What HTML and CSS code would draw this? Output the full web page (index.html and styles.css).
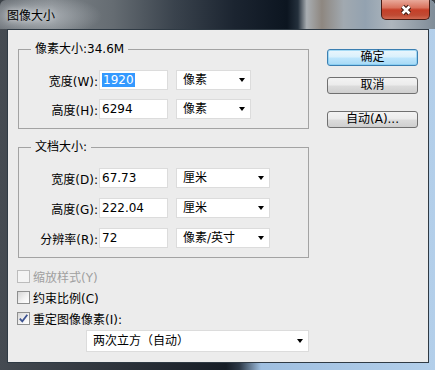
FILE: index.html
```html
<!DOCTYPE html>
<html lang="zh-CN">
<head>
    <meta charset="UTF-8">
    <title>图像大小</title>
    <link rel="stylesheet" href="styles.css">
</head>
<body>
    <div class="window">
        <div class="titlebar">
            <span class="title">图像大小</span>
            <div class="close-btn">
                <svg width="14" height="12" viewBox="0 0 14 12">
                    <path d="M3.5 2.5 L10.5 9.5 M10.5 2.5 L3.5 9.5" stroke="#3b1810" stroke-width="4.6" fill="none"/>
                    <path d="M3.5 2.5 L10.5 9.5 M10.5 2.5 L3.5 9.5" stroke="#ffffff" stroke-width="2.6" fill="none"/>
                </svg>
            </div>
        </div>
        <div class="client">
            <div class="main-col">
                <fieldset class="group group-pixel">
                    <legend>像素大小:34.6M</legend>
                    <div class="field-row">
                        <span class="field-label">宽度(W):</span>
                        <span class="text-box"><span class="selected">1920</span></span>
                        <span class="dropdown unit-short">像素<i class="arrow"></i></span>
                    </div>
                    <div class="field-row">
                        <span class="field-label">高度(H):</span>
                        <span class="text-box">6294</span>
                        <span class="dropdown unit-short">像素<i class="arrow"></i></span>
                    </div>
                </fieldset>

                <fieldset class="group group-doc">
                    <legend>文档大小:</legend>
                    <div class="field-row">
                        <span class="field-label">宽度(D):</span>
                        <span class="text-box">67.73</span>
                        <span class="dropdown unit-long">厘米<i class="arrow"></i></span>
                    </div>
                    <div class="field-row">
                        <span class="field-label">高度(G):</span>
                        <span class="text-box">222.04</span>
                        <span class="dropdown unit-long">厘米<i class="arrow"></i></span>
                    </div>
                    <div class="field-row">
                        <span class="field-label">分辨率(R):</span>
                        <span class="text-box">72</span>
                        <span class="dropdown unit-long">像素/英寸<i class="arrow"></i></span>
                    </div>
                </fieldset>

                <div class="options">
                    <div class="check-row disabled">
                        <span class="check-box"></span>
                        <span>缩放样式(Y)</span>
                    </div>
                    <div class="check-row">
                        <span class="check-box"></span>
                        <span>约束比例(C)</span>
                    </div>
                    <div class="check-row">
                        <span class="check-box">
                            <svg width="11" height="11" viewBox="0 0 11 11">
                                <path d="M1.8 5.6 L4.3 8.3 L9.3 1.8" stroke="#3d5391" stroke-width="1.8" fill="none"/>
                            </svg>
                        </span>
                        <span>重定图像像素(I):</span>
                    </div>
                </div>

                <span class="dropdown resample">两次立方（自动）<i class="arrow"></i></span>
            </div>

            <div class="button-col">
                <button class="btn btn-default">确定</button>
                <button class="btn">取消</button>
                <button class="btn btn-auto">自动(A)...</button>
            </div>
        </div>
    </div>
</body>
</html>
```

FILE: styles.css
```css
body {
    margin: 0;
    padding: 0;
    background-color: #3c4248;
    font-family: "DejaVu Sans", "Noto Sans CJK SC", sans-serif;
    font-size: 12px;
    color: #000;
}

.window {
    width: 435px;
    height: 370px;
    display: flex;
    flex-direction: column;
    border-radius: 6px 6px 0 0;
    overflow: hidden;
    background: linear-gradient(to right, #454b52 0%, #2a3038 30%, #161d26 52%, #2c3846 55%, #9fbfe0 60%, #b3cfea 100%);
}

.titlebar {
    height: 29px;
    display: flex;
    align-items: flex-start;
    background:
        radial-gradient(ellipse 70px 22px at 32px 16px, rgba(200, 205, 210, 0.75), rgba(200, 205, 210, 0) 100%),
        linear-gradient(to right, #5d6369 0%, #7c8287 12%, #656c72 26%, #3a434d 40%, #1b2430 54%, #0c1520 66%, #24303c 68.5%, #a9aeb2 70.5%, #8e8780 74%, #a1a9b0 79%, #93a2b0 84%, #aeb6bd 90%, #7f8c98 100%);
}

.title {
    padding: 8px 0 0 7px;
    line-height: 16px;
    color: #000;
    text-shadow: 0 0 6px rgba(255, 255, 255, 0.9);
}

.close-btn {
    margin-left: auto;
    margin-right: 5px;
    width: 47px;
    height: 19px;
    border: 1px solid #4a1c14;
    border-top: none;
    border-radius: 0 0 5px 5px;
    background: linear-gradient(#e9a99a 0%, #d9735e 40%, #c53f28 52%, #c04a33 80%, #d06a52 100%);
    display: flex;
    align-items: center;
    justify-content: center;
}

.client {
    flex: 1;
    margin: 0 6px 7px 7px;
    border: 1px solid #2f3a44;
    background-color: #ececec;
    display: flex;
    padding: 11px 10px 0 10px;
}

.main-col {
    width: 291px;
    display: flex;
    flex-direction: column;
}

.group {
    margin: 0;
    padding: 13px 0 9px 0;
    border: 1px solid #a3a3a3;
    min-inline-size: 0;
}

.group legend {
    margin-left: 12px;
    padding: 0 4px;
    line-height: 16px;
}

.group-doc {
    margin-top: 10px;
}

.field-row {
    display: flex;
    align-items: center;
    height: 20px;
}

.group-pixel .field-row + .field-row {
    margin-top: 9px;
}

.group-doc .field-row + .field-row {
    margin-top: 10px;
}

.field-label {
    width: 79px;
    margin-right: 1px;
    text-align: right;
    white-space: nowrap;
}

.text-box {
    box-sizing: border-box;
    width: 69px;
    height: 20px;
    padding-left: 2px;
    line-height: 18px;
    background-color: #fff;
    border: 1px solid #dcdcdc;
}

.selected {
    background-color: #3399ff;
    color: #fff;
    padding: 0 1px;
}

.dropdown {
    box-sizing: border-box;
    height: 20px;
    padding-left: 6px;
    line-height: 18px;
    background-color: #fff;
    border: 1px solid #dcdcdc;
    display: flex;
    align-items: center;
}

.unit-short {
    width: 75px;
    margin-left: 8px;
}

.unit-long {
    width: 94px;
    margin-left: 8px;
}

.arrow {
    margin-left: auto;
    margin-right: 5px;
    width: 0;
    height: 0;
    border-left: 3.5px solid transparent;
    border-right: 3.5px solid transparent;
    border-top: 4px solid #000;
}

.options {
    margin-top: 8px;
}

.check-row {
    height: 21px;
    display: flex;
    align-items: center;
    gap: 3px;
}

.check-box {
    box-sizing: border-box;
    width: 13px;
    height: 13px;
    margin-left: -1px;
    border: 1px solid #8e8f8f;
    background: linear-gradient(135deg, #d6d6d6 0%, #f4f4f4 60%, #ffffff 100%);
    display: flex;
    align-items: center;
    justify-content: center;
}

.check-row.disabled {
    color: #a0a0a0;
}

.check-row.disabled .check-box {
    border-color: #bcbcbc;
    background: #f4f4f4;
}

.resample {
    width: 223px;
    height: 22px;
    margin-top: 1px;
    margin-left: 68px;
    line-height: 20px;
}

.button-col {
    display: flex;
    flex-direction: column;
    margin-left: 18px;
    padding-top: 8px;
}

.btn {
    box-sizing: border-box;
    width: 91px;
    height: 17px;
    padding: 0;
    font-family: inherit;
    font-size: 12px;
    line-height: 15px;
    color: #000;
    border: 1px solid #707070;
    border-radius: 3px;
    background: linear-gradient(#f3f3f3 0%, #ebebeb 48%, #dcdcdc 52%, #cfcfcf 100%);
    cursor: pointer;
}

.btn + .btn {
    margin-top: 11px;
}

.btn-default {
    border-color: #3c7fb1;
    background: linear-gradient(#eaf6fd 0%, #d9f0fc 48%, #bee6fd 52%, #a7d9f5 100%);
    box-shadow: inset 0 0 0 1px rgba(120, 200, 240, 0.6);
}

.btn.btn-auto {
    margin-top: 17px;
}
```
